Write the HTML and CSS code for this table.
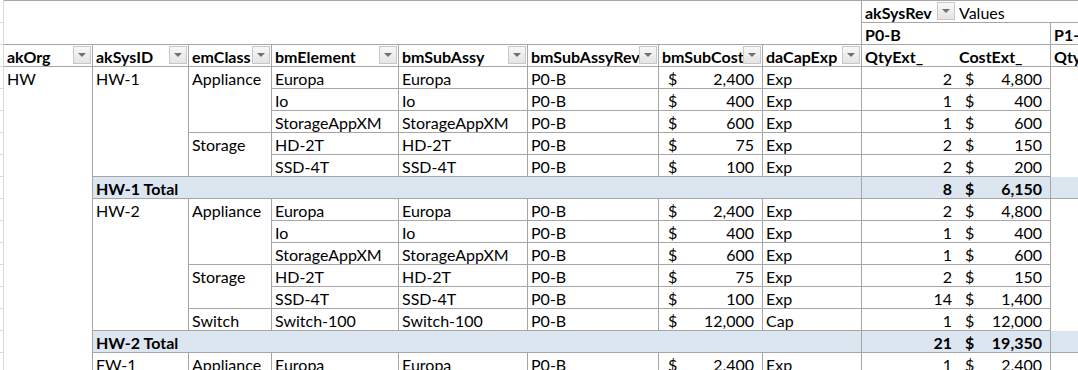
FILE: index.html
```html
<!DOCTYPE html>
<html>
<head>
<meta charset="utf-8">
<title>Pivot</title>
<link rel="stylesheet" href="styles.css">
</head>
<body>
<div class="sheet">
  <!-- row 1 -->
  <div class="sp"></div>
  <div class="c blank top cs8 nb"></div>
  <div class="c top hd nr b"><span class="t">akSysRev</span><span class="dd"></span></div>
  <div class="c top nr cap">Values</div>
  <div class="c top nr"></div>

  <!-- row 2 -->
  <div class="sp"></div>
  <div class="c blank cs8"></div>
  <div class="c cs2 b">P0-B</div>
  <div class="c nr b">P1-</div>

  <!-- row 3 -->
  <div class="sp"></div>
  <div class="c hd b"><span class="t">akOrg</span><span class="dd"></span></div>
  <div class="c hd b"><span class="t">akSysID</span><span class="dd"></span></div>
  <div class="c hd b"><span class="t">emClass</span><span class="dd"></span></div>
  <div class="c hd b"><span class="t">bmElement</span><span class="dd"></span></div>
  <div class="c hd b"><span class="t">bmSubAssy</span><span class="dd"></span></div>
  <div class="c hd b"><span class="t">bmSubAssyRev</span><span class="dd"></span></div>
  <div class="c hd b"><span class="t">bmSubCost</span><span class="dd"></span></div>
  <div class="c hd b"><span class="t">daCapExp</span><span class="dd"></span></div>
  <div class="c nr b">QtyExt_</div>
  <div class="c b">CostExt_</div>
  <div class="c nr b">Qty</div>

  <!-- row 4 -->
  <div class="sp"></div>
  <div class="c nb rs14">HW</div>
  <div class="c rs5">HW-1</div>
  <div class="c rs3">Appliance</div>
  <div class="c">Europa</div>
  <div class="c">Europa</div>
  <div class="c">P0-B</div>
  <div class="c cur"><span>$</span><span>2,400</span></div>
  <div class="c">Exp</div>
  <div class="c qty">2</div>
  <div class="c cur cost"><span>$</span><span>4,800</span></div>
  <div class="c p1"></div>

  <!-- row 5 -->
  <div class="sp"></div>
  <div class="c">Io</div>
  <div class="c">Io</div>
  <div class="c">P0-B</div>
  <div class="c cur"><span>$</span><span>400</span></div>
  <div class="c">Exp</div>
  <div class="c qty">1</div>
  <div class="c cur cost"><span>$</span><span>400</span></div>
  <div class="c p1"></div>

  <!-- row 6 -->
  <div class="sp"></div>
  <div class="c">StorageAppXM</div>
  <div class="c">StorageAppXM</div>
  <div class="c">P0-B</div>
  <div class="c cur"><span>$</span><span>600</span></div>
  <div class="c">Exp</div>
  <div class="c qty">1</div>
  <div class="c cur cost"><span>$</span><span>600</span></div>
  <div class="c p1"></div>

  <!-- row 7 -->
  <div class="sp"></div>
  <div class="c rs2">Storage</div>
  <div class="c">HD-2T</div>
  <div class="c">HD-2T</div>
  <div class="c">P0-B</div>
  <div class="c cur"><span>$</span><span>75</span></div>
  <div class="c">Exp</div>
  <div class="c qty">2</div>
  <div class="c cur cost"><span>$</span><span>150</span></div>
  <div class="c p1"></div>

  <!-- row 8 -->
  <div class="sp"></div>
  <div class="c">SSD-4T</div>
  <div class="c">SSD-4T</div>
  <div class="c">P0-B</div>
  <div class="c cur"><span>$</span><span>100</span></div>
  <div class="c">Exp</div>
  <div class="c qty">2</div>
  <div class="c cur cost"><span>$</span><span>200</span></div>
  <div class="c p1"></div>

  <!-- row 9 total -->
  <div class="sp"></div>
  <div class="c tot cs7 b">HW-1 Total</div>
  <div class="c tot qty b">8</div>
  <div class="c tot cur cost b"><span>$</span><span>6,150</span></div>
  <div class="c tot p1 pb"></div>

  <!-- row 10 -->
  <div class="sp"></div>
  <div class="c rs6">HW-2</div>
  <div class="c rs3">Appliance</div>
  <div class="c">Europa</div>
  <div class="c">Europa</div>
  <div class="c">P0-B</div>
  <div class="c cur"><span>$</span><span>2,400</span></div>
  <div class="c">Exp</div>
  <div class="c qty">2</div>
  <div class="c cur cost"><span>$</span><span>4,800</span></div>
  <div class="c p1"></div>

  <!-- row 11 -->
  <div class="sp"></div>
  <div class="c">Io</div>
  <div class="c">Io</div>
  <div class="c">P0-B</div>
  <div class="c cur"><span>$</span><span>400</span></div>
  <div class="c">Exp</div>
  <div class="c qty">1</div>
  <div class="c cur cost"><span>$</span><span>400</span></div>
  <div class="c p1"></div>

  <!-- row 12 -->
  <div class="sp"></div>
  <div class="c">StorageAppXM</div>
  <div class="c">StorageAppXM</div>
  <div class="c">P0-B</div>
  <div class="c cur"><span>$</span><span>600</span></div>
  <div class="c">Exp</div>
  <div class="c qty">1</div>
  <div class="c cur cost"><span>$</span><span>600</span></div>
  <div class="c p1"></div>

  <!-- row 13 -->
  <div class="sp"></div>
  <div class="c rs2">Storage</div>
  <div class="c">HD-2T</div>
  <div class="c">HD-2T</div>
  <div class="c">P0-B</div>
  <div class="c cur"><span>$</span><span>75</span></div>
  <div class="c">Exp</div>
  <div class="c qty">2</div>
  <div class="c cur cost"><span>$</span><span>150</span></div>
  <div class="c p1"></div>

  <!-- row 14 -->
  <div class="sp"></div>
  <div class="c">SSD-4T</div>
  <div class="c">SSD-4T</div>
  <div class="c">P0-B</div>
  <div class="c cur"><span>$</span><span>100</span></div>
  <div class="c">Exp</div>
  <div class="c qty">14</div>
  <div class="c cur cost"><span>$</span><span>1,400</span></div>
  <div class="c p1"></div>

  <!-- row 15 -->
  <div class="sp"></div>
  <div class="c">Switch</div>
  <div class="c">Switch-100</div>
  <div class="c">Switch-100</div>
  <div class="c">P0-B</div>
  <div class="c cur"><span>$</span><span>12,000</span></div>
  <div class="c">Cap</div>
  <div class="c qty">1</div>
  <div class="c cur cost"><span>$</span><span>12,000</span></div>
  <div class="c p1"></div>

  <!-- row 16 total -->
  <div class="sp"></div>
  <div class="c tot cs7 b">HW-2 Total</div>
  <div class="c tot qty b">21</div>
  <div class="c tot cur cost b"><span>$</span><span>19,350</span></div>
  <div class="c tot p1 pb"></div>

  <!-- row 17 -->
  <div class="sp"></div>
  <div class="c">FW-1</div>
  <div class="c">Appliance</div>
  <div class="c">Europa</div>
  <div class="c">Europa</div>
  <div class="c">P0-B</div>
  <div class="c cur"><span>$</span><span>2,400</span></div>
  <div class="c">Exp</div>
  <div class="c qty">1</div>
  <div class="c cur cost"><span>$</span><span>2,400</span></div>
  <div class="c p1"></div>
</div>
</body>
</html>
```

FILE: styles.css
```css
html, body {
  margin: 0;
  padding: 0;
  background: #ffffff;
  overflow: hidden;
}

.sheet {
  display: grid;
  grid-template-columns: 4px 89px 96px 83px 127px 129px 131px 104px 99px 94px 95px 100px;
  grid-template-rows: 23px;
  grid-auto-rows: 22px;
  width: 1151px;
  font-family: Lato, "Liberation Sans", sans-serif;
  font-size: 16px;
  color: #000000;
}

.sp {
  box-sizing: border-box;
  border-right: 1px solid #d9d9d9;
  border-bottom: 1px solid #d9d9d9;
}

.c {
  box-sizing: border-box;
  border-right: 1px solid #a6a6a6;
  border-bottom: 1px solid #a6a6a6;
  padding: 2px 3px 0 3px;
  line-height: 19px;
  white-space: nowrap;
  overflow: hidden;
  min-width: 0;
}

.top { border-top: 1px solid #a6a6a6; }
.nb { border-bottom: none; }
.nr { border-right: none; }
.b { font-weight: bold; }

.blank { background: #ffffff; }

.cs2 { grid-column: span 2; }
.cs7 { grid-column: span 7; }
.cs8 { grid-column: span 8; }
.rs2 { grid-row: span 2; }
.rs3 { grid-row: span 3; }
.rs5 { grid-row: span 5; }
.rs6 { grid-row: span 6; }
.rs14 { grid-row: span 14; }

.hd {
  display: flex;
  align-items: flex-start;
  padding-right: 1px;
}
.hd .t {
  flex: 1 1 auto;
  min-width: 0;
  overflow: hidden;
}
.dd {
  flex: none;
  position: relative;
  box-sizing: border-box;
  width: 18px;
  height: 18px;
  margin-top: -1px;
  border: 1px solid #c8c8c8;
  background: linear-gradient(#f8f8f8, #e4e4e4);
}
.dd::after {
  content: "";
  position: absolute;
  left: 4px;
  top: 6px;
  border-left: 4px solid transparent;
  border-right: 4px solid transparent;
  border-top: 4px solid #707070;
}

.qty {
  border-right: none;
  text-align: right;
  padding-right: 4px;
}

.cur {
  display: flex;
  justify-content: space-between;
  padding-left: 9px;
  padding-right: 8px;
}

.p1 {
  border-right: none;
  border-bottom: none;
}
.pb { border-bottom: 1px solid #a6a6a6; }

.tot {
  background: #dce6f1;
}
```
